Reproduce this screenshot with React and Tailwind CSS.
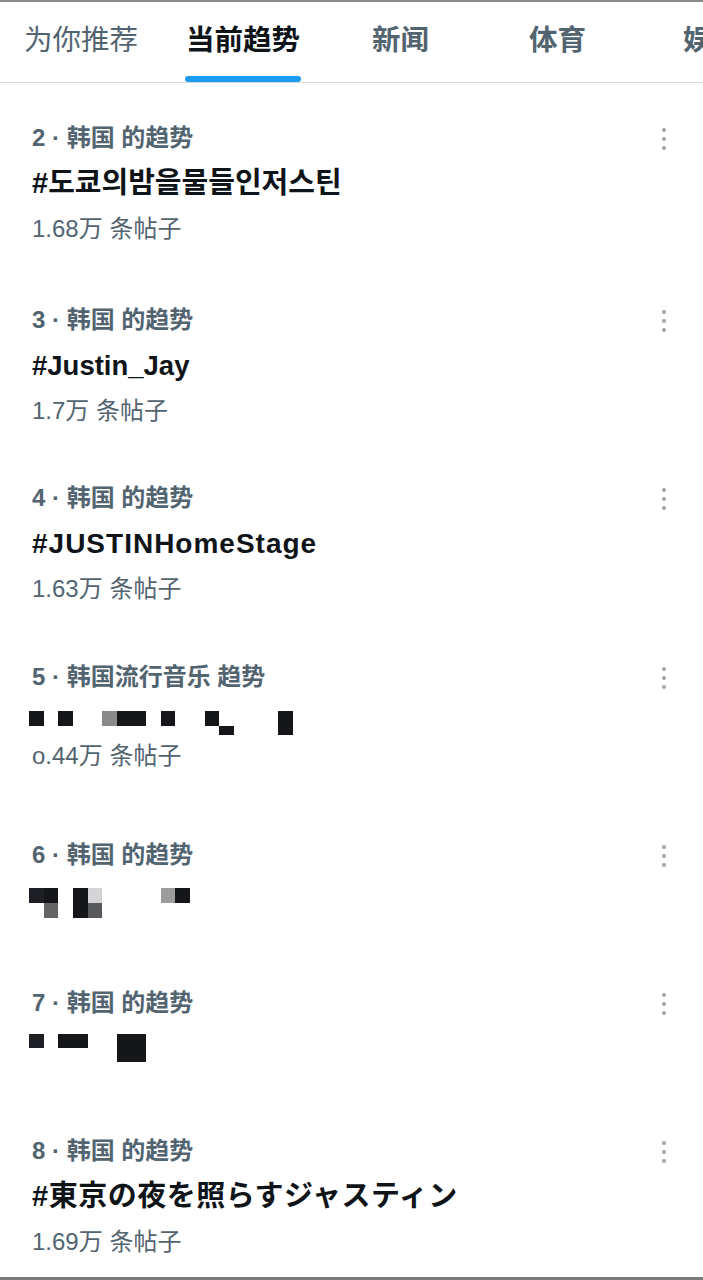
const CJK = "font-['Liberation_Sans','Noto_Sans_CJK_SC',sans-serif]";

const TABS = [
    { label: "为你推荐", cls: "font-normal text-[#536471]" },
    { label: "当前趋势", cls: "font-bold text-[#0f1419] ml-[48px]", active: true },
    { label: "新闻", cls: "font-semibold text-[#536471] ml-[72px]" },
    { label: "体育", cls: "font-semibold text-[#536471] ml-[100px]" },
    { label: "娱乐", cls: "font-semibold text-[#536471] ml-[97px]" }
];

// pixelated censor cells on a ~15px grid; each row is a list of [col, colour]
const K = "#14161a";

const ITEMS = [
    { h: "h-[182px]", head: "2 · 韩国 的趋势", title: "#도쿄의밤을물들인저스틴", font: "font-['Liberation_Sans','Noto_Sans_CJK_KR',sans-serif] text-[29px]", count: "1.68万 条帖子" },
    { h: "h-[178px]", head: "3 · 韩国 的趋势", title: "#Justin_Jay", font: "text-[27.5px]", count: "1.7万 条帖子" },
    { h: "h-[179px]", head: "4 · 韩国 的趋势", title: "#JUSTINHomeStage", font: "text-[28px] tracking-[1px]", count: "1.63万 条帖子" },
    {
        h: "h-[178px]", head: "5 · 韩国流行音乐 趋势", count: "o.44万 条帖子",
        pixels: [
            [[0, K], [2, K], [5, "#8a8a8a"], [6, K], [7, K], [9, K], [12, K], [17, K]],
            [[13, K], [17, K]]
        ],
        rowH: ["h-[15px]", "h-[9px]"]
    },
    {
        h: "h-[148px]", head: "6 · 韩国 的趋势",
        pixels: [
            [[0, "#1d1f24"], [1, K], [3, K], [4, "#d4d4d6"], [9, "#9c9c9c"], [10, K]],
            [[1, "#646464"], [3, K], [4, "#56585c"]]
        ],
        rowH: ["h-[15px]", "h-[15px]"]
    },
    {
        h: "h-[148px]", head: "7 · 韩国 的趋势",
        pixels: [
            [[0, "#1d1f24"], [2, K], [3, K], [6, K], [7, K]],
            [[6, K], [7, K]]
        ],
        rowH: ["h-[14px]", "h-[14px]"]
    },
    { h: "flex-1", head: "8 · 韩国 的趋势", title: "#東京の夜を照らすジャスティン", font: "font-['Liberation_Sans','Noto_Sans_CJK_JP',sans-serif] text-[29px] tracking-[0.5px]", count: "1.69万 条帖子" }
];

function Pixels({ rows, rowH, top }) {
    return (
        <div className={`flex flex-col -ml-[3px] ${top}`}>
            {rows.map((row, r) => {
                const map = Object.fromEntries(row);
                return (
                    <div key={r} className={`flex ${rowH[r]}`}>
                        {Array.from({ length: 18 }).map((_, c) => (
                            <div
                                key={c}
                                className="w-[14.65px] h-full shrink-0"
                                style={{ background: map[c] || "transparent" }}
                            />
                        ))}
                    </div>
                );
            })}
        </div>
    );
}

function Dots() {
    return (
        <div className="flex flex-col items-center gap-[5px] pt-[1px]">
            <span className="w-[4px] h-[4px] rounded-full bg-[#9aa5ae]" />
            <span className="w-[4px] h-[4px] rounded-full bg-[#9aa5ae]" />
            <span className="w-[4px] h-[4px] rounded-full bg-[#9aa5ae]" />
        </div>
    );
}

export default function App() {
    return (
        <div className={`w-[703px] h-[1280px] bg-white flex flex-col overflow-hidden ${CJK}`}>
            <div className="h-[2px] bg-[#8a8a8a]" />
            <div className="h-[81px] border-b border-[#cfd9de] flex items-stretch whitespace-nowrap overflow-hidden">
                <div className="flex pl-[24px]">
                    {TABS.map(t => (
                        <div
                            key={t.label}
                            className={`relative flex items-center pb-[4px] text-[28.5px] shrink-0 ${t.cls}`}
                        >
                            {t.label}
                            {t.active && (
                                <span className="absolute left-[-1px] right-[-1px] bottom-[0px] h-[6px] rounded-full bg-[#1d9bf0]" />
                            )}
                        </div>
                    ))}
                </div>
            </div>
            <div className="flex-1 flex flex-col pt-[32px]">
                {ITEMS.map((item, i) => (
                    <div key={item.head} className={`${item.h} pl-[32px] pr-[37px] shrink-0 flex flex-col`}>
                        <div className="h-[46px] flex items-center justify-between">
                            <span className="text-[24px] font-bold text-[#536471]">
                                {item.head}
                            </span>
                            <Dots />
                        </div>
                        {item.title && (
                            <div className={`h-[45px] flex items-center font-bold text-[#0f1419] ${item.font}`}>
                                {item.title}
                            </div>
                        )}
                        {item.pixels && (
                            <Pixels
                                rows={item.pixels}
                                rowH={item.rowH}
                                top={i === 3 ? "pt-[11px]" : i === 4 ? "pt-[10px]" : "pt-[8px]"}
                            />
                        )}
                        {item.count && (
                            <div className={`${i === 3 ? "h-[42px]" : "h-[46px]"} flex items-center text-[24px] text-[#536471]`}>
                                {item.count}
                            </div>
                        )}
                    </div>
                ))}
            </div>
            <div className="h-[3px] bg-[#7a7a7a]" />
        </div>
    );
}
